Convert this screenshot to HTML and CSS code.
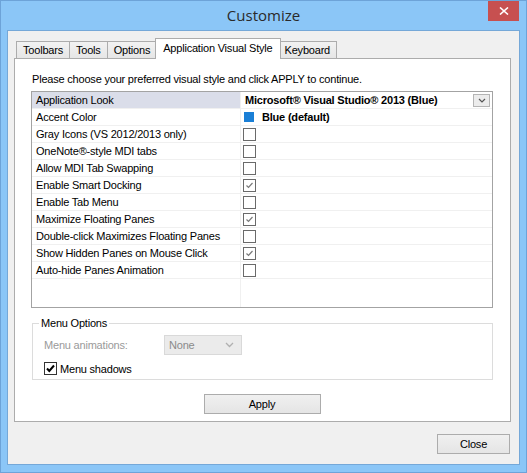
FILE: index.html
```html
<!DOCTYPE html>
<html lang="en">

<head>
    <meta charset="UTF-8">
    <title>Customize</title>
    <link rel="stylesheet" href="styles.css">
</head>

<body>
    <div class="window">
        <div class="titlebar">
            <span></span>
            <h1 class="title">Customize</h1>
            <button class="close-x" title="Close">
                <svg width="10" height="8" viewBox="0 0 10 8">
                    <path d="M1 0.5 L9 7.5 M9 0.5 L1 7.5" stroke="#fff" stroke-width="1.6" fill="none" />
                </svg>
            </button>
        </div>

        <div class="client">
            <div class="tabs">
                <div class="tab">Toolbars</div>
                <div class="tab">Tools</div>
                <div class="tab">Options</div>
                <div class="tab active">Application Visual Style</div>
                <div class="tab">Keyboard</div>
            </div>

            <div class="panel">
                <p class="hint">Please choose your preferred visual style and click APPLY to continue.</p>

                <div class="props">
                    <div class="prop selected">
                        <div class="prop-name">Application Look</div>
                        <div class="prop-value">
                            <b>Microsoft® Visual Studio® 2013 (Blue)</b>
                            <span class="drop-btn">
                                <svg width="8" height="5" viewBox="0 0 8 5">
                                    <path d="M1 1 L4 4 L7 1" stroke="#555" stroke-width="1.2" fill="none" />
                                </svg>
                            </span>
                        </div>
                    </div>
                    <div class="prop">
                        <div class="prop-name">Accent Color</div>
                        <div class="prop-value"><span class="swatch"></span><b class="swatch-name">Blue (default)</b></div>
                    </div>
                    <div class="prop">
                        <div class="prop-name">Gray Icons (VS 2012/2013 only)</div>
                        <div class="prop-value"><span class="check"></span></div>
                    </div>
                    <div class="prop">
                        <div class="prop-name">OneNote®-style MDI tabs</div>
                        <div class="prop-value"><span class="check"></span></div>
                    </div>
                    <div class="prop">
                        <div class="prop-name">Allow MDI Tab Swapping</div>
                        <div class="prop-value"><span class="check"></span></div>
                    </div>
                    <div class="prop">
                        <div class="prop-name">Enable Smart Docking</div>
                        <div class="prop-value"><span class="check on"><svg width="11" height="11" viewBox="0 0 11 11"><path d="M2.5 5.5 L4.5 7.5 L8.5 3" stroke="#7a7a7a" stroke-width="1.2" fill="none" /></svg></span></div>
                    </div>
                    <div class="prop">
                        <div class="prop-name">Enable Tab Menu</div>
                        <div class="prop-value"><span class="check"></span></div>
                    </div>
                    <div class="prop">
                        <div class="prop-name">Maximize Floating Panes</div>
                        <div class="prop-value"><span class="check on"><svg width="11" height="11" viewBox="0 0 11 11"><path d="M2.5 5.5 L4.5 7.5 L8.5 3" stroke="#7a7a7a" stroke-width="1.2" fill="none" /></svg></span></div>
                    </div>
                    <div class="prop">
                        <div class="prop-name">Double-click Maximizes Floating Panes</div>
                        <div class="prop-value"><span class="check"></span></div>
                    </div>
                    <div class="prop">
                        <div class="prop-name">Show Hidden Panes on Mouse Click</div>
                        <div class="prop-value"><span class="check on"><svg width="11" height="11" viewBox="0 0 11 11"><path d="M2.5 5.5 L4.5 7.5 L8.5 3" stroke="#7a7a7a" stroke-width="1.2" fill="none" /></svg></span></div>
                    </div>
                    <div class="prop">
                        <div class="prop-name">Auto-hide Panes Animation</div>
                        <div class="prop-value"><span class="check"></span></div>
                    </div>
                    <div class="prop filler">
                        <div class="prop-name"></div>
                        <div class="prop-value"></div>
                    </div>
                </div>

                <fieldset class="group">
                    <legend>Menu Options</legend>
                    <div class="group-row">
                        <span class="muted label">Menu animations:</span>
                        <span class="fake-select">
                            <span>None</span>
                            <svg width="9" height="6" viewBox="0 0 9 6">
                                <path d="M1 1 L4.5 4.5 L8 1" stroke="#b0b0b0" stroke-width="1.3" fill="none" />
                            </svg>
                        </span>
                    </div>
                    <div class="group-row">
                        <span class="box-check">
                            <svg width="11" height="11" viewBox="0 0 11 11">
                                <path d="M2 5.5 L4.3 8 L9 2.5" stroke="#000" stroke-width="2" fill="none" />
                            </svg>
                        </span>
                        <span>Menu shadows</span>
                    </div>
                </fieldset>

                <div class="apply-row">
                    <button class="button apply">Apply</button>
                </div>
            </div>

            <div class="footer">
                <button class="button close">Close</button>
            </div>
        </div>
    </div>
</body>

</html>
```

FILE: styles.css
```css
body {
    margin: 0;
    font-family: "Liberation Sans", Arial, sans-serif;
    font-size: 11px;
    letter-spacing: -0.2px;
    color: #000;
}

.window {
    width: 527px;
    height: 473px;
    box-sizing: border-box;
    background-color: #8bc6f7;
    border: 1px solid #6da3d8;
    display: flex;
    flex-direction: column;
}

/* title bar */
.titlebar {
    height: 29px;
    display: grid;
    grid-template-columns: 1fr auto 1fr;
    align-items: start;
}

.title {
    margin: 0;
    font-family: "Open Sans", "Noto Sans", sans-serif;
    font-weight: normal;
    font-size: 15px;
    letter-spacing: 0;
    line-height: 28px;
    color: #2a2a2a;
}

.close-x {
    justify-self: end;
    width: 31px;
    height: 20px;
    margin-right: 7px;
    padding: 0;
    border: none;
    background-color: #c75050;
    display: flex;
    align-items: center;
    justify-content: center;
}

/* client area */
.client {
    flex: 1;
    margin: 0 6px 7px;
    background-color: #f0f0f0;
    border: 1px solid #75a8d8;
}

.tabs {
    display: flex;
    align-items: flex-end;
    margin: 7px 0 0 6px;
    padding-left: 2px;
}

.tab {
    height: 16px;
    line-height: 17px;
    padding: 0 6px;
    border: 1px solid #acacac;
    border-bottom: none;
    margin-left: -1px;
    background: linear-gradient(#f2f2f2, #e6e6e6);
}

.tab:first-child {
    margin-left: 0;
}

.tab.active {
    position: relative;
    z-index: 1;
    height: 20px;
    line-height: 18px;
    padding: 0 7px;
    margin: 0 -2px -1px -2px;
    background: #fff;
}

.panel {
    height: 364px;
    box-sizing: border-box;
    margin: 0 8px 0 6px;
    padding: 0 17px 0 16px;
    border: 1px solid #acacac;
    background-color: #fff;
}

.hint {
    margin: 14px 0 5px 1px;
    line-height: 13px;
}

/* property grid */
.props {
    height: 217px;
    box-sizing: border-box;
    border: 1px solid #a3a3a3;
    display: flex;
    flex-direction: column;
}

.prop {
    display: grid;
    grid-template-columns: 208px 1fr;
    height: 17px;
    box-sizing: border-box;
    border-bottom: 1px solid #f0f0f0;
}

.prop.filler {
    flex: 1;
    border-bottom: none;
}

.prop-name {
    padding-left: 4px;
    line-height: 16px;
    white-space: nowrap;
}

.prop.selected .prop-name {
    background-color: #dadde9;
}

.prop-value {
    border-left: 1px solid #f0f0f0;
    padding-left: 2px;
    display: flex;
    align-items: center;
    white-space: nowrap;
}

.prop.selected .prop-value {
    padding-left: 4px;
    justify-content: space-between;
}

.drop-btn {
    width: 15px;
    height: 11px;
    margin-right: 2px;
    border: 1px solid #b4b4b4;
    background-color: #ececec;
    display: flex;
    align-items: center;
    justify-content: center;
}

.swatch {
    width: 10px;
    height: 10px;
    margin-left: 1px;
    background-color: #1a7fd6;
}

.swatch-name {
    margin-left: 8px;
}

.check {
    width: 11px;
    height: 11px;
    border: 1px solid #6a6a6a;
    background-color: #fff;
    display: flex;
}

/* menu options group */
.group {
    margin: 9px 0 0 1px;
    padding: 5px 6px 3px;
    border: 1px solid #dcdcdc;
}

.group legend {
    padding: 0 2px;
    line-height: 13px;
}

.group-row {
    display: flex;
    align-items: center;
    padding-left: 5px;
    height: 20px;
}

.group-row + .group-row {
    height: 15px;
    margin-top: 6px;
}

.muted {
    color: #9a9a9a;
}

.label {
    width: 120px;
}

.fake-select {
    width: 78px;
    height: 20px;
    box-sizing: border-box;
    padding: 0 7px 0 4px;
    border: 1px solid #d9d9d9;
    background-color: #ebebeb;
    color: #8a8a8a;
    display: flex;
    align-items: center;
    justify-content: space-between;
}

.box-check {
    width: 11px;
    height: 11px;
    margin-right: 3px;
    border: 1px solid #333;
    background-color: #fff;
    display: flex;
}

/* buttons */
.apply-row {
    display: flex;
    justify-content: center;
    margin-top: 14px;
}

.button {
    height: 20px;
    padding: 0;
    border: 1px solid #acacac;
    background: linear-gradient(#f0f0f0, #e5e5e5);
    font-family: inherit;
    font-size: 11px;
    letter-spacing: -0.2px;
    color: #000;
}

.apply {
    width: 117px;
}

.footer {
    display: flex;
    justify-content: flex-end;
    margin: 12px 9px 0 0;
}

.close {
    width: 73px;
}
```
